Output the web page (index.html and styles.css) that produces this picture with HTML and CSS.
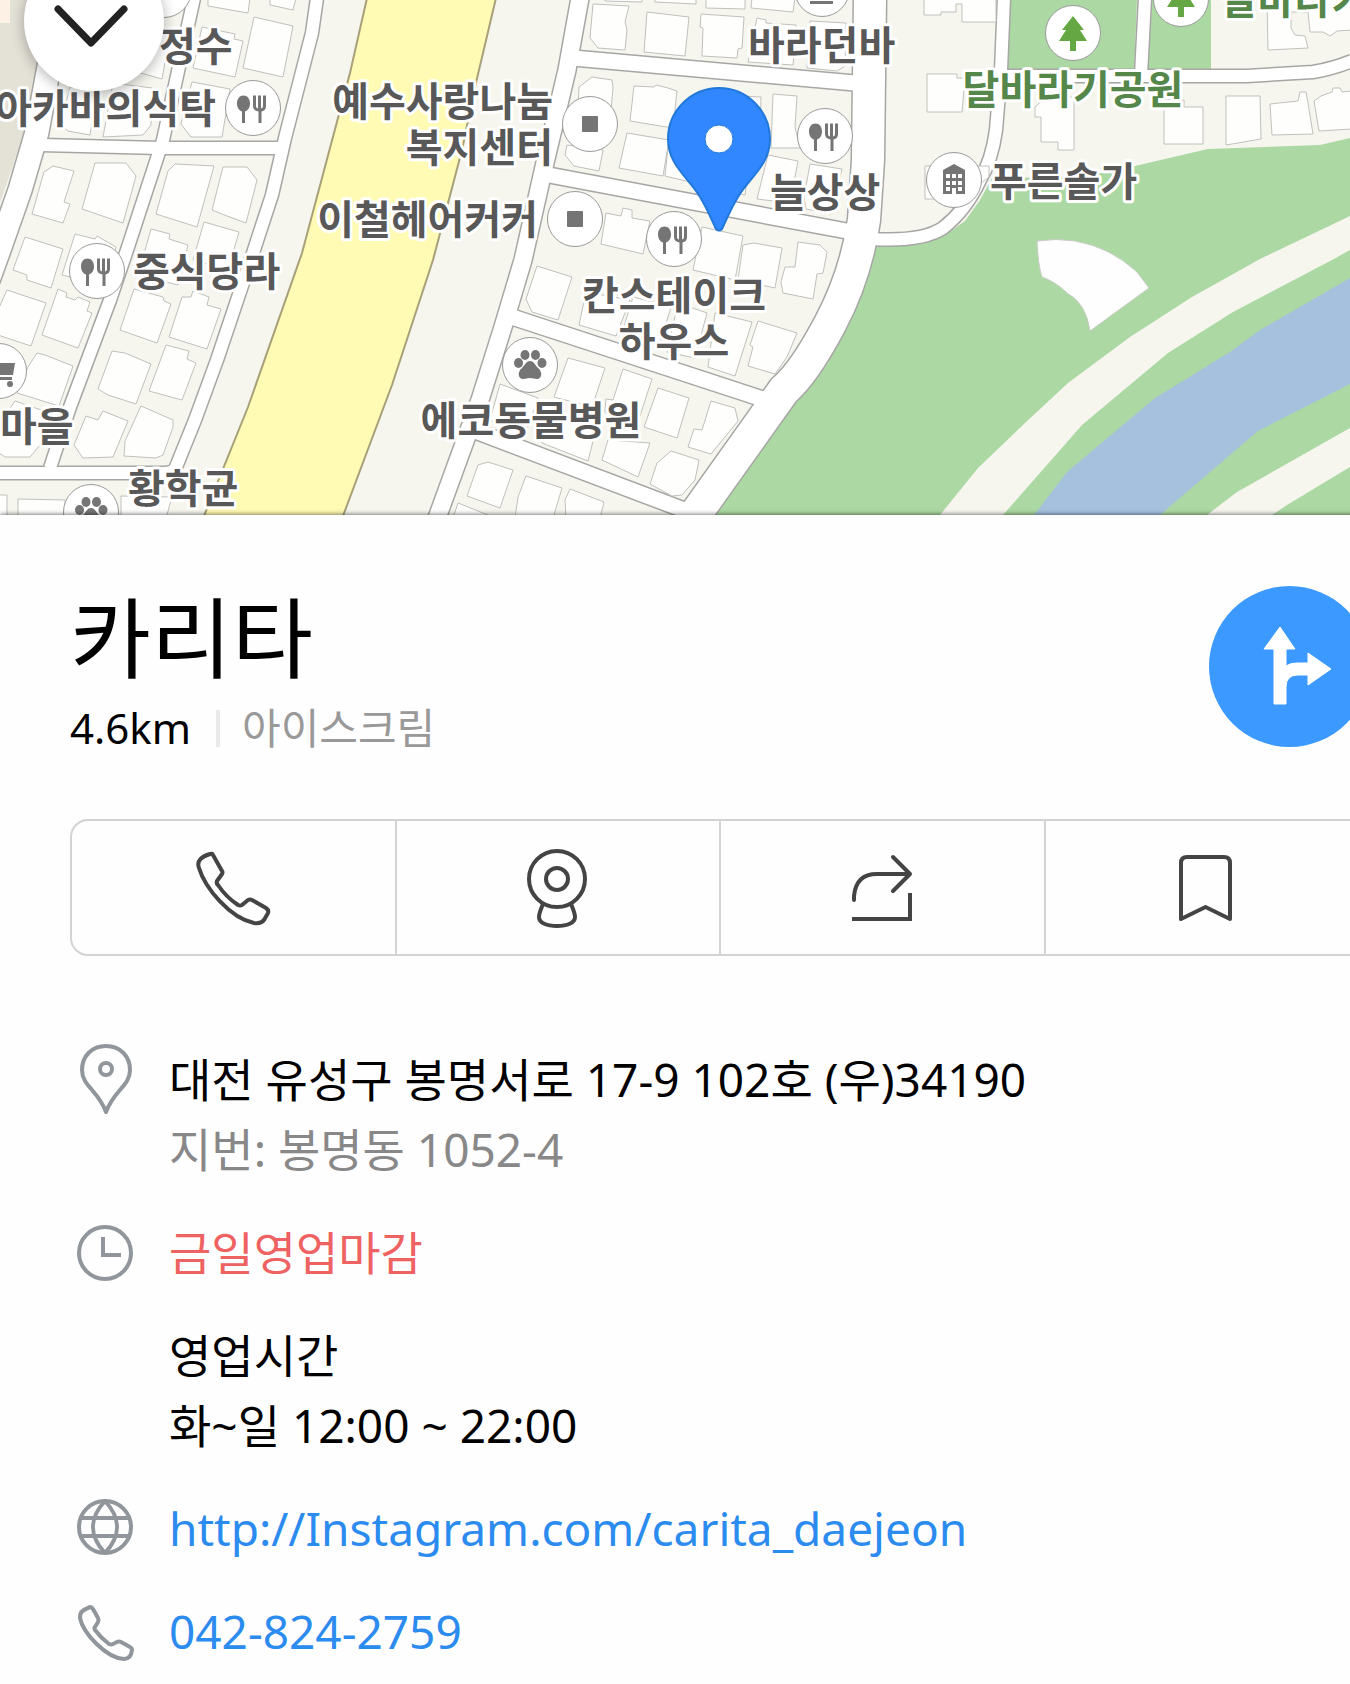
FILE: index.html
```html
<!DOCTYPE html>
<html lang="ko">
<head>
    <meta charset="utf-8">
    <title>카리타</title>
    <meta name="viewport" content="width=device-width, initial-scale=1">
    <link rel="stylesheet" href="styles.css">
</head>
<body>
    <div class="map">
        <svg class="map-canvas" viewBox="0 0 1350 515" preserveAspectRatio="xMidYMid slice">
            <defs>
                <g id="dot"><circle r="27.5"/></g>
                <g id="food">
                    <circle r="27.5"/>
                    <path class="ink" d="M-9.500-12.500c4 0 6.500 3.500 6.500 8 0 4-2 7-5 8V15h-3V3.500c-3-1-5-4-5-8 0-4.500 2.500-8 6.500-8z"/>
                    <path class="ink" d="M0-12.500h3V-2q0 2 2 2.500v-13h3V.5Q10 0 10-2v-10.500h3V-2q0 4.500-4.500 5.500V15h-3V3.500Q0 2.500 0-2z"/>
                </g>
                <g id="square"><circle r="27.500"/><rect class="ink" x="-8" y="-8" width="16" height="16" rx="1"/></g>
                <g id="paw">
                    <circle r="27.5"/>
                    <g class="ink">
                        <ellipse cx="-5" cy="-10" rx="4.500" ry="5"/>
                        <ellipse cx="5.500" cy="-10" rx="4.500" ry="5"/>
                        <ellipse cx="-11.500" cy="-2" rx="4.500" ry="5"/>
                        <ellipse cx="12" cy="-2" rx="4.500" ry="5"/>
                        <path d="M0-4c4 0 5 4 8 7 5 4 4 11-1 11-3 0-4-1-7-1s-4 1-7 1c-5 0-6-7-1-11 3-3 4-7 8-7z"/>
                    </g>
                </g>
                <g id="tree">
                    <circle r="27.5"/>
                    <path class="leaf" d="M0-17 11-3H7L14 8H3v10h-6V8h-11l7-11h-4z"/>
                </g>
                <g id="apartment">
                    <circle r="27.5"/>
                    <path class="ink" fill-rule="evenodd" d="M-11-10 0-16 11-10V14H2V8h-4v6h-9zM-8-6v4h4v-4zm6 0v4h4v-4zm6 0v4h4v-4zM-8 1v4h4V1zm6 0v4h4V1zm6 0v4h4V1zM-8 7v4h4V7zm12 0v4h4V7z"/>
                </g>
            </defs>

            <rect class="land" width="1350" height="515"/>
            <path class="hill" d="M0 0H47L37 63 25 130 0 203z"/>
            <path class="plot" d="M0 0H10V23H0z"/>

            <!-- parks and river -->
            <path class="green" d="M1009 0H1137L1134 72H1007zM1152 0H1211V70H1148z"/>
            <path class="green" d="M872 246L903 246 923 243 945 235 965 221 980 200 992 178 1060 177 1110 172 1135 166 1208 149 1320 145 1350 138V515H700L828 363z"/>
            <path class="bank" d="M1350 216L1260 259 1192 297 1130 337 1068 383 1025 423 978 468 940 515H1003L1082 425 1168 353 1233 312 1332 260 1350 250z"/>
            <path class="water" d="M1350 278L1260 330 1230 352 1155 398 1067 472 1034 515H1160L1258 431 1350 384z"/>
            <path class="bank" d="M1350 428L1237 492 1207 515H1272L1287 505 1350 467z"/>
            <path class="hall" d="M1037 241Q1057 238 1075 241 1110 247 1137 272L1149 288 1090 331Q1086 303 1067 293 1056 282 1042 277 1038 265 1037 241z"/>

            <path class="highway" d="M367-2L350 73 302 253 248 407 204 516H343L392 385 433 260 462 150 475 87 496-2z"/>

            <g class="casing">
                <path class="w24" d="M62-5L52 50 37 132 20 190 0 247-12 280"/>
                <path class="w13" d="M194-2L163 140 127 250 110 300 70 407 50 468"/>
                <path class="w13" d="M317-2L312 33 285 138 272 195 253 253 217 360 195 420 176 467Q174 473 164 473H-5"/>
                <path class="w13" d="M42 145L160 148H282"/>
                <path class="w17" d="M580-2L567 70 544 167 523 260 503 327 480 400 437 518"/>
                <path class="w16" d="M573 58L855 83M549 175L852 232M512 317L766 400M470 429L700 516"/>
                <path class="w32" d="M870-2L868 160 864 220Q856 275 830 324T784 390L690 522"/>
                <path class="w13" d="M1004-2L1001 70 996 130Q992 160 980 180 966 210 943 228 922 242 872 239"/>
                <path class="w13" d="M1145-2L1141 75M1002 76H1247L1313 72Q1332 69 1352 61"/>
            </g>
            <g class="road">
                <path class="w24" d="M62-5L52 50 37 132 20 190 0 247-12 280"/>
                <path class="w13" d="M194-2L163 140 127 250 110 300 70 407 50 468"/>
                <path class="w13" d="M317-2L312 33 285 138 272 195 253 253 217 360 195 420 176 467Q174 473 164 473H-5"/>
                <path class="w13" d="M42 145L160 148H282"/>
                <path class="w17" d="M580-2L567 70 544 167 523 260 503 327 480 400 437 518"/>
                <path class="w16" d="M573 58L855 83M549 175L852 232M512 317L766 400M470 429L700 516"/>
                <path class="w32" d="M870-2L868 160 864 220Q856 275 830 324T784 390L690 522"/>
                <path class="w13" d="M1004-2L1001 70 996 130Q992 160 980 180 966 210 943 228 922 242 872 239"/>
                <path class="w13" d="M1145-2L1141 75M1002 76H1247L1313 72Q1332 69 1352 61"/>
            </g>

            <g class="building">
                <path d="M208-2V6L248 13 250-2zM270-2V5L293 10 296-2zM254 17L293 26 283 77 243 68zM202 27L235 34 234 39 243 41 235 77 193 68z"/>
                <path d="M192 82L230 89 222 137H191L181 124zM70 87L97 90 90 135 68 131 61 124zM113 83L152 88 151 125 143 135 103 137zM130 70L162 79 170 35 140 30z"/>
                <path d="M53 166L74 171 64 202 70 204 63 223 32 214 44 172zM95 163H126L136 176 123 223 82 209zM175 164L214 166 197 227 156 214 168 171zM223 167H247L257 180 246 223 227 216 212 210z"/>
                <path d="M204 222L239 232 228 270 193 260zM151 229L170 234 169 239 188 245 178 285 138 275zM25 237L63 249 51 288 27 280 27 275 13 270zM75 234L95 239 97 236 116 247 105 285 62 275z"/>
                <path d="M7 290L46 303 31 346-2 335V310zM58 289L67 293 66 297 75 300 78 297 90 302 87 311 92 313 78 348 42 335zM134 289L163 297 164 301 171 304 157 343 120 330zM182 297H191L193 291 209 297 207 305 221 309 207 349 169 337z"/>
                <path d="M112 351L125 353 151 364 136 404 108 395 98 389zM166 345L189 351 187 359 196 363 182 400 149 391zM37 353L45 355 73 366 59 406 17 393 28 367zM86 416L98 420 103 411 128 421 113 457 83 458 74 445z"/>
                <path d="M141 406L173 420V427L163 455 156 458 124 456 125 441zM15 401L50 413 40 445 30 457H5L-5 450V430zM-2 495H7V518H-2zM18 499L65 500V518H18zM121 496L172 497 166 518H121z"/>
                <path d="M593 4L629 6 625 22 627 30 625 50 598 48 590 38zM647 12L689 17 685 56 644 52zM701 14L744 17 742 48 738 49 737 58 702 56 703 28 700 27zM757 18L766 20V23L796 25 793 65 748 62zM810 21L846 23 845 66 837 71 807 68z"/>
                <path d="M605-2V1L642 2V-2zM655-2V2L696 4V-2zM706-2V8L745 9V-2zM752-2L751 8 793 12 795-2zM579 87L592 77 612 80 613 88 611 110H578zM567 145L565 155 574 166 599 171 603 150z"/>
                <path d="M634 86L654 87 656 85 668 88 677 91 673 128 630 121zM627 133L669 140 663 176 619 168zM668 147L665 176 745 195 750 150zM740 96L761 97 760 147H735zM773 94L797 96 795 127 800 148H771zM768 155L798 161 790 203 757 199zM810 164L842 169 831 214 806 209 804 197z"/>
                <path d="M606 213L621 216 623 208 632 210V218L650 221 643 254 601 244zM702 227L743 236 735 280 693 270zM743 245L754 243 782 248 775 288 738 280zM798 242L820 245 827 252 823 273 817 274 813 299 783 293 781 282 785 267H795z"/>
                <path d="M537 266L572 277 558 320 532 312 526 299zM586 292L630 300 616 336 579 325zM633 297L671 307 660 343 622 333zM678 303L707 313 695 358 667 352zM715 313L752 322 735 376 708 367zM758 321L797 333 787 357 775 374 748 366 753 347 750 345z"/>
                <path d="M568 358L605 368 592 407 554 397zM623 369L652 379 637 425 605 412 606 399 613 400zM658 388L689 398 677 438 644 427zM711 401L735 408 738 421 711 454 688 447 694 429 702 430zM608 440L650 443 638 477 602 460zM671 451L699 460 695 480 682 495 672 496 650 484 657 463z"/>
                <path d="M500 384L538 398 525 435 490 420zM550 410L597 425 588 461 542 443zM478 465L488 462 513 470 500 508 467 496zM526 476L562 488 553 518H515L518 497zM570 489L604 502 600 518H566L565 500zM458 503L488 515V518H453z"/>
                <path d="M924-2V15H941V12H956V4H962V22H996V-2zM927 74H957V78H965L962 112H927zM925 166H989V177L960 199H925zM1035 107L1045 98 1074 97V150H1058V142H1041V117H1035zM1164 100H1184V107H1203V144H1164z"/>
                <path d="M1226 96H1260L1261 139 1226 145zM1270 104L1298 101 1300 92H1306L1308 103 1313 134 1272 135zM1314 101L1321 96 1332 92 1333 88H1340L1342 92 1352 91V129L1319 131zM1267-2L1268 50 1308 48 1305 36 1295 35 1291 28V12H1308L1310 32H1323L1330 36 1337 31 1352 30V-2z"/>
            </g>

            <g class="poi">
                <use href="#dot" x="164" y="-10"/>
                <use href="#food" x="253" y="108"/>
                <use href="#food" x="97" y="271"/>
                <use href="#dot" x="-1" y="371"/>
                <path class="ink" d="M-20 363H15L13 375H-10V377H12V380H-20z"/>
                <circle class="ink" cx="10" cy="384" r="3"/>
                <use href="#paw" x="91" y="512"/>
                <use href="#square" x="590" y="124"/>
                <use href="#square" x="575" y="219"/>
                <use href="#food" x="674" y="239"/>
                <use href="#food" x="825" y="136"/>
                <use href="#paw" x="530" y="365"/>
                <use href="#dot" x="822" y="-11"/>
                <path class="ink" d="M810 1H833V4H810z"/>
                <use href="#tree" x="1073" y="33"/>
                <use href="#tree" x="1181" y="-1"/>
                <use href="#apartment" x="954" y="180"/>
            </g>

            <g class="label">
                <text x="159" y="61">정수</text>
                <text class="end" x="216" y="123">아카바의식탁</text>
                <text class="end" x="553" y="116">예수사랑나눔</text>
                <text class="end" x="553" y="162">복지센터</text>
                <text class="end" x="538" y="234">이철헤어커커</text>
                <text x="133" y="286">중식당라</text>
                <text x="0" y="441">마을</text>
                <text x="128" y="503">황학균</text>
                <text x="748" y="60">바라던바</text>
                <text x="770" y="207">늘상상</text>
                <text class="mid" x="674" y="310">칸스테이크</text>
                <text class="mid" x="674" y="356">하우스</text>
                <text class="mid" x="531" y="435">에코동물병원</text>
                <text x="990" y="196">푸른솔가</text>
                <text class="park mid" x="1073" y="104">달바라기공원</text>
                <text class="park" x="1221" y="14">달바라기공원</text>
            </g>

            <path class="pin" d="M719 88C747 88 770 111 770 139C770 165 750 177 738 197C730 210 726 221 722 229Q719 232 716 229C712 221 708 210 700 197C688 177 668 165 668 139C668 111 691 88 719 88z"/>
            <circle class="pin-hole" cx="719" cy="139" r="14"/>
        </svg>
        <button class="close" type="button" aria-label="닫기">
            <svg width="80" height="50" viewBox="0 0 80 50"><path d="M7 8L40 42 73 8"/></svg>
        </button>
    </div>

    <main class="panel">
        <header class="place">
            <div>
                <h1>카리타</h1>
                <p class="meta"><span>4.6km</span><span class="category">아이스크림</span></p>
            </div>
            <button class="route" type="button" aria-label="길찾기">
                <svg viewBox="0 0 161 161">
                    <path d="M71 41L86 63H77V80Q81 77 88 77H99V67L122 83 99 99V89H89Q77 89 77 101V118H65V63H55z"/>
                </svg>
            </button>
        </header>

        <div class="actions">
            <button type="button" aria-label="전화">
                <svg viewBox="0 0 80 80"><path d="M17 6Q19 5 20 7L29 23Q30 24 29 26L24 33Q23 35 25 37Q33 49 45 57Q47 58 49 57L55 52Q57 51 59 52L73 60Q76 62 75 65L71 72Q68 76 61 75C37 70 12 40 6 20C3 12 10 8 17 6z"/></svg>
            </button>
            <button type="button" aria-label="로드뷰">
                <svg viewBox="0 0 80 80"><circle cx="39" cy="31" r="28"/><circle cx="39" cy="31" r="11"/><path d="M25 56C23 61 21 65 21 69C21 75 29 78 39 78S57 75 57 69C57 65 55 61 53 56"/></svg>
            </button>
            <button type="button" aria-label="공유">
                <svg viewBox="0 0 80 80"><path d="M12 52V48Q14 26 35 26H68M51 9L68 26 51 43"/><path class="sharp" d="M10 71H68V45"/></svg>
            </button>
            <button type="button" aria-label="저장">
                <svg viewBox="0 0 80 80"><path d="M14 71V15Q14 9 20 9H57Q63 9 63 15V71L38.500 59z"/></svg>
            </button>
        </div>

        <ul class="info">
            <li>
                <svg viewBox="0 0 68 70"><path d="M35 2C49 2 59 12 59 26C59 42 43 46 35 68C27 46 11 42 11 26C11 12 21 2 35 2z"/><circle cx="35" cy="25" r="6"/></svg>
                <div>
                    <p>대전 유성구 봉명서로 17-9 102호 (우)34190</p>
                    <p class="old">지번: 봉명동 1052-4</p>
                </div>
            </li>
            <li>
                <svg viewBox="0 0 68 70"><circle cx="34" cy="36" r="26"/><path class="sharp" d="M32 20V38H50"/></svg>
                <p class="closed">금일영업마감</p>
            </li>
            <li class="hours">
                <div>
                    <p>영업시간</p>
                    <p>화~일 12:00 ~ 22:00</p>
                </div>
            </li>
            <li>
                <svg viewBox="0 0 68 70"><circle cx="34" cy="34" r="26"/><path d="M34 8C18 25 18 43 34 60C50 43 50 25 34 8zM10 25H58M10 43H58"/></svg>
                <a href="http://Instagram.com/carita_daejeon">http://Instagram.com/carita_daejeon</a>
            </li>
            <li>
                <svg viewBox="0 0 68 70"><path d="M17 12Q20 10 22 13L27 22Q28 24 27 26L24 31Q23 32 24 34Q30 42 38 48Q40 49 42 48L46 46Q48 45 50 46L59 51Q61 52 61 54Q60 63 53 63C35 62 12 37 9 22Q8 15 17 12z"/></svg>
                <a href="tel:042-824-2759">042-824-2759</a>
            </li>
        </ul>
    </main>
</body>
</html>
```
FILE: styles.css
```css
body { font-family: 'Noto Sans', 'Noto Sans CJK KR', sans-serif; margin: 0; background: #fefefe; color: #000; overflow: hidden; }
h1, p, ul { margin: 0; padding: 0; font-weight: 400; }
button { border: 0; padding: 0; background: none; }
a { color: #2b8bef; text-decoration: none; }

/* map */
.map { position: relative; overflow: hidden; }
.map-canvas { display: block; width: 100%; height: 515px; }
.land, .bank { fill: #f6f6ef; }
.hill { fill: #e4e2d7; }
.plot { fill: #fdf0e4; }
.green { fill: #acd8a3; }
.water { fill: #a5c1dd; }
.hall { fill: #fefefe; stroke: #c8ccc4; stroke-width: 1; }
.highway { fill: #fffab4; stroke: #a8a078; stroke-width: 2; }
.casing, .road { fill: none; stroke-linejoin: round; }
.casing { stroke: #a6a6a4; }
.road { stroke: #fff; }
.road .w13 { stroke-width: 12px; }
.road .w16 { stroke-width: 15px; }
.road .w17 { stroke-width: 17px; }
.road .w24 { stroke-width: 23px; }
.road .w32 { stroke-width: 32px; }
.casing .w13 { stroke-width: 15px; }
.casing .w16 { stroke-width: 18px; }
.casing .w17 { stroke-width: 20px; }
.casing .w24 { stroke-width: 26px; }
.casing .w32 { stroke-width: 35px; }
.building { fill: #fefefd; stroke: #c0c0bc; stroke-width: 1; }
.poi { fill: #fff; stroke: #999; stroke-width: 1; }
.ink { fill: #757575; stroke: none; }
.leaf { fill: #65a843; stroke: none; }
.label { font-family: 'Noto Sans CJK KR', sans-serif; font-size: 40px; font-weight: 700; fill: #585858; stroke: #fff; stroke-width: 6px; stroke-linejoin: round; paint-order: stroke; }
.label .park { fill: #55874a; }
.end { text-anchor: end; }
.mid { text-anchor: middle; }
.pin { fill: #3187ff; stroke: #2278d8; stroke-width: 2; }
.pin-hole { fill: #fff; stroke: #2278d8; stroke-width: 1; }

.close { position: absolute; left: 24px; top: -49px; width: 140px; height: 140px; border-radius: 50%; background: #fff; box-shadow: 0 3px 14px rgba(0, 0, 0, 0.3); }
.close svg { display: block; margin: 10px 0 0 27px; fill: none; stroke: #222; stroke-width: 7; stroke-linecap: round; stroke-linejoin: round; }

/* detail sheet, runs past the right edge of the screen */
.panel { position: relative; margin-right: -90px; padding: 71px 70px 18px; background: #fefefe; box-shadow: 0 -1px 4px rgba(0, 0, 0, 0.5); }
.place { display: flex; justify-content: space-between; align-items: flex-start; }
h1 { font-size: 88px; line-height: 102px; }
.meta { display: flex; align-items: center; font-size: 42px; line-height: 80px; }
.category { display: flex; align-items: center; color: #999; }
.category::before { content: ""; width: 4px; height: 37px; margin: 0 22px 0 25px; background: #eaeaea; }
.route { width: 161px; height: 161px; border-radius: 50%; background: #3b99ff; }
.route svg { display: block; fill: #fff; stroke: #fff; stroke-width: 1; stroke-linejoin: round; }

.actions { display: flex; margin-top: 51px; border: 2px solid #d3d3d3; border-radius: 18px; }
.actions button { flex: 1; display: flex; align-items: center; justify-content: center; height: 133px; }
.actions button + button { border-left: 2px solid #d3d3d3; }
.actions svg { width: 80px; height: 80px; fill: none; stroke: #444; stroke-width: 4; stroke-linecap: round; stroke-linejoin: round; }

.info { display: flex; flex-direction: column; gap: 33px; margin-top: 88px; font-size: 46px; line-height: 70px; list-style: none; }
.info li { display: flex; gap: 29px; }
.info svg { flex: none; width: 70px; height: 70px; fill: none; stroke: #90969b; stroke-width: 4; stroke-linecap: round; stroke-linejoin: round; }
.info .hours { padding-left: 99px; }
.old { color: #888; }
.closed { color: #ef6262; }
svg .sharp { stroke-linecap: butt; stroke-linejoin: miter; }
```
